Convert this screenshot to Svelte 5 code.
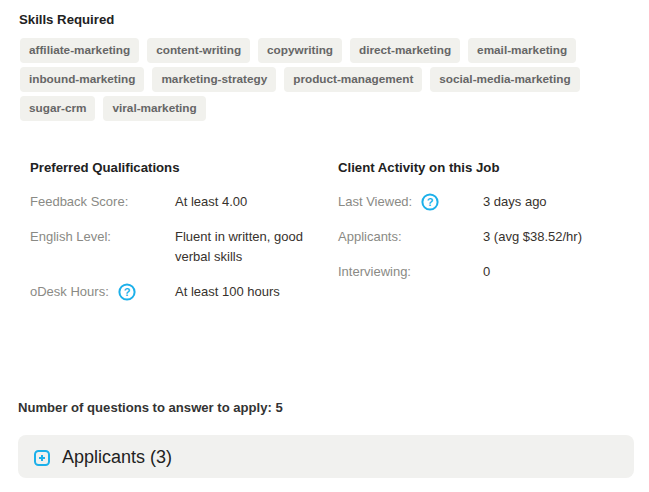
<script>
  const skills = [
    'affiliate-marketing', 'content-writing', 'copywriting', 'direct-marketing', 'email-marketing',
    'inbound-marketing', 'marketing-strategy', 'product-management', 'social-media-marketing',
    'sugar-crm', 'viral-marketing'
  ];
</script>

{#snippet help()}
  <svg class="help" width="18" height="18" viewBox="0 0 18 18">
    <circle cx="9" cy="9" r="7.6" fill="none" stroke="#1cb0ea" stroke-width="2" />
    <text x="9" y="13" text-anchor="middle">?</text>
  </svg>
{/snippet}

<div class="page">
  <h3 class="title">Skills Required</h3>
  <div class="tags">
    {#each skills as skill}
      <span class="tag">{skill}</span>
    {/each}
  </div>

  <div class="columns">
    <section class="left">
      <h4>Preferred Qualifications</h4>
      <div class="row">
        <div class="label">Feedback Score:</div>
        <div class="value">At least 4.00</div>
      </div>
      <div class="row">
        <div class="label">English Level:</div>
        <div class="value">Fluent in written, good verbal skills</div>
      </div>
      <div class="row">
        <div class="label">oDesk Hours: {@render help()}</div>
        <div class="value">At least 100 hours</div>
      </div>
    </section>
    <section class="right">
      <h4>Client Activity on this Job</h4>
      <div class="row">
        <div class="label">Last Viewed: {@render help()}</div>
        <div class="value">3 days ago</div>
      </div>
      <div class="row">
        <div class="label">Applicants:</div>
        <div class="value">3 (avg $38.52/hr)</div>
      </div>
      <div class="row">
        <div class="label">Interviewing:</div>
        <div class="value">0</div>
      </div>
    </section>
  </div>

  <p class="questions">Number of questions to answer to apply: 5</p>

  <div class="applicants">
    <svg class="plus" width="16" height="16" viewBox="0 0 16 16">
      <rect x="1" y="1" width="14" height="14" rx="3.5" fill="none" stroke="#1cb0ea" stroke-width="2" />
      <path d="M5 8h6M8 5v6" stroke="#1cb0ea" stroke-width="2" fill="none" />
    </svg>
    <span>Applicants (3)</span>
  </div>
</div>

<style>
  :global(body) {
    background: #fff;
  }
  .page {
    width: 649px;
    height: 492px;
    box-sizing: border-box;
    padding: 11px 15px 0 18px;
    overflow: hidden;
    font-family: "Liberation Sans", Arial, sans-serif;
    font-size: 13px;
    color: #37322d;
  }
  .title {
    margin: 0 0 9px 1px;
    font-size: 13.2px;
    line-height: 18px;
    font-weight: bold;
    color: #222;
  }
  .tags {
    display: flex;
    flex-wrap: wrap;
    gap: 4px 8px;
    margin-left: 2px;
    width: 580px;
  }
  .tag {
    height: 25px;
    line-height: 24px;
    padding: 0 9px;
    border-radius: 4px;
    background: #f1f1ed;
    color: #666;
    font-size: 11.75px;
    font-weight: bold;
  }
  .columns {
    display: flex;
    margin-top: 38px;
    padding-left: 12px;
    height: 240px;
  }
  .left {
    width: 308px;
  }
  .right {
    width: 290px;
  }
  h4 {
    margin: 0 0 15px;
    font-size: 13.2px;
    line-height: 18px;
    font-weight: bold;
    color: #222;
  }
  .row {
    display: flex;
    margin-bottom: 15px;
    line-height: 20px;
  }
  .label {
    width: 145px;
    flex: none;
    display: flex;
    align-items: center;
    align-self: flex-start;
    color: #8a8a85;
  }
  .value {
    width: 135px;
    color: #37322d;
  }
  .help {
    margin-left: 9px;
  }
  .help text {
    font-size: 11px;
    font-weight: bold;
    fill: #1cb0ea;
  }
  .questions {
    margin: 0 0 18px;
    font-size: 13.1px;
    line-height: 18px;
    font-weight: bold;
    color: #333;
  }
  .applicants {
    display: flex;
    align-items: center;
    gap: 12px;
    height: 43px;
    padding-left: 16px;
    border-radius: 8px;
    background: #f1f1ef;
    font-size: 18px;
    color: #222;
  }
  .plus {
    margin-top: 3px;
  }
  .applicants span {
    margin-top: 2px;
  }
</style>
